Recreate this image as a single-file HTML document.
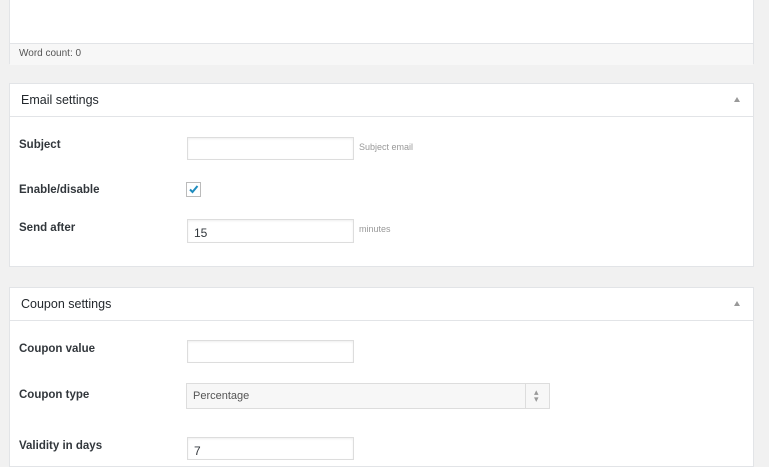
<!DOCTYPE html>
<html><head><meta charset="utf-8"><style>
body{margin:0;width:769px;height:452px;background:#f1f1f1;font-family:"Liberation Sans",sans-serif;position:relative;overflow:hidden;color:#23282d}
.a{position:absolute}
.box{position:absolute;left:9px;width:745px;background:#fff;border:1px solid #e2e4e7;box-sizing:border-box}
.hd{position:absolute;left:0;right:0;top:0;height:32px;border-bottom:1px solid #e2e4e7}
.hd span{position:absolute;left:11px;top:9px;font-size:12.5px;color:#23282d}
.hd i{position:absolute;right:13px;top:13px;width:0;height:0;border-left:3px solid transparent;border-right:3px solid transparent;border-bottom:5px solid #999}
.lb{position:absolute;left:19px;font-size:11.5px;font-weight:bold;color:#32373c}
.in{position:absolute;left:187px;width:167px;height:23px;border:1px solid #ddd;box-sizing:border-box;background:#fff;box-shadow:inset 0 1px 2px rgba(0,0,0,.07);font-size:12px;color:#32373c;padding:6px 0 0 6px}
.hint{position:absolute;left:359px;font-size:9px;color:#999}
</style></head><body>
<div class="box" style="top:-2px;height:66px">
  <div class="a" style="left:0;right:0;top:44px;height:21px;background:#f7f7f7;border-top:1px solid #e2e4e7"></div>
  <div class="a" style="left:9px;top:49px;font-size:10px;color:#555">Word count: 0</div>
</div>

<div class="box" style="top:83px;height:184px">
  <div class="hd"><span>Email settings</span><i></i></div>
</div>
<div class="lb" style="top:139px">Subject</div>
<div class="in" style="top:137px"></div>
<div class="hint" style="top:142px">Subject email</div>
<div class="lb" style="top:184px">Enable/disable</div>
<div class="a" style="left:186px;top:182px;width:15px;height:15px;border:1px solid #bbb;box-sizing:border-box;background:#fff">
  <svg width="13" height="13" viewBox="0 0 13 13" style="position:absolute;left:0;top:0"><path d="M3 6.5 L5.5 9 L10.5 3" stroke="#1e8cbe" stroke-width="2" fill="none"/></svg>
</div>
<div class="lb" style="top:222px">Send after</div>
<div class="in" style="top:219px;height:24px">15</div>
<div class="hint" style="top:224px">minutes</div>

<div class="box" style="top:287px;height:180px">
  <div class="hd"><span>Coupon settings</span><i></i></div>
</div>
<div class="lb" style="top:343px">Coupon value</div>
<div class="in" style="top:340px"></div>
<div class="lb" style="top:389px">Coupon type</div>
<div class="a" style="left:186px;top:383px;width:364px;height:26px;border:1px solid #ddd;box-sizing:border-box;background:#f7f7f7">
  <div class="a" style="left:6px;top:6px;font-size:11px;color:#555">Percentage</div>
  <div class="a" style="left:338px;top:0;bottom:0;border-left:1px solid #ddd"></div>
  <div class="a" style="left:347px;top:5px;font-size:9px;color:#999;line-height:7px">▴<br>▾</div>
</div>
<div class="lb" style="top:440px">Validity in days</div>
<div class="in" style="top:437px">7</div>
</body></html>
